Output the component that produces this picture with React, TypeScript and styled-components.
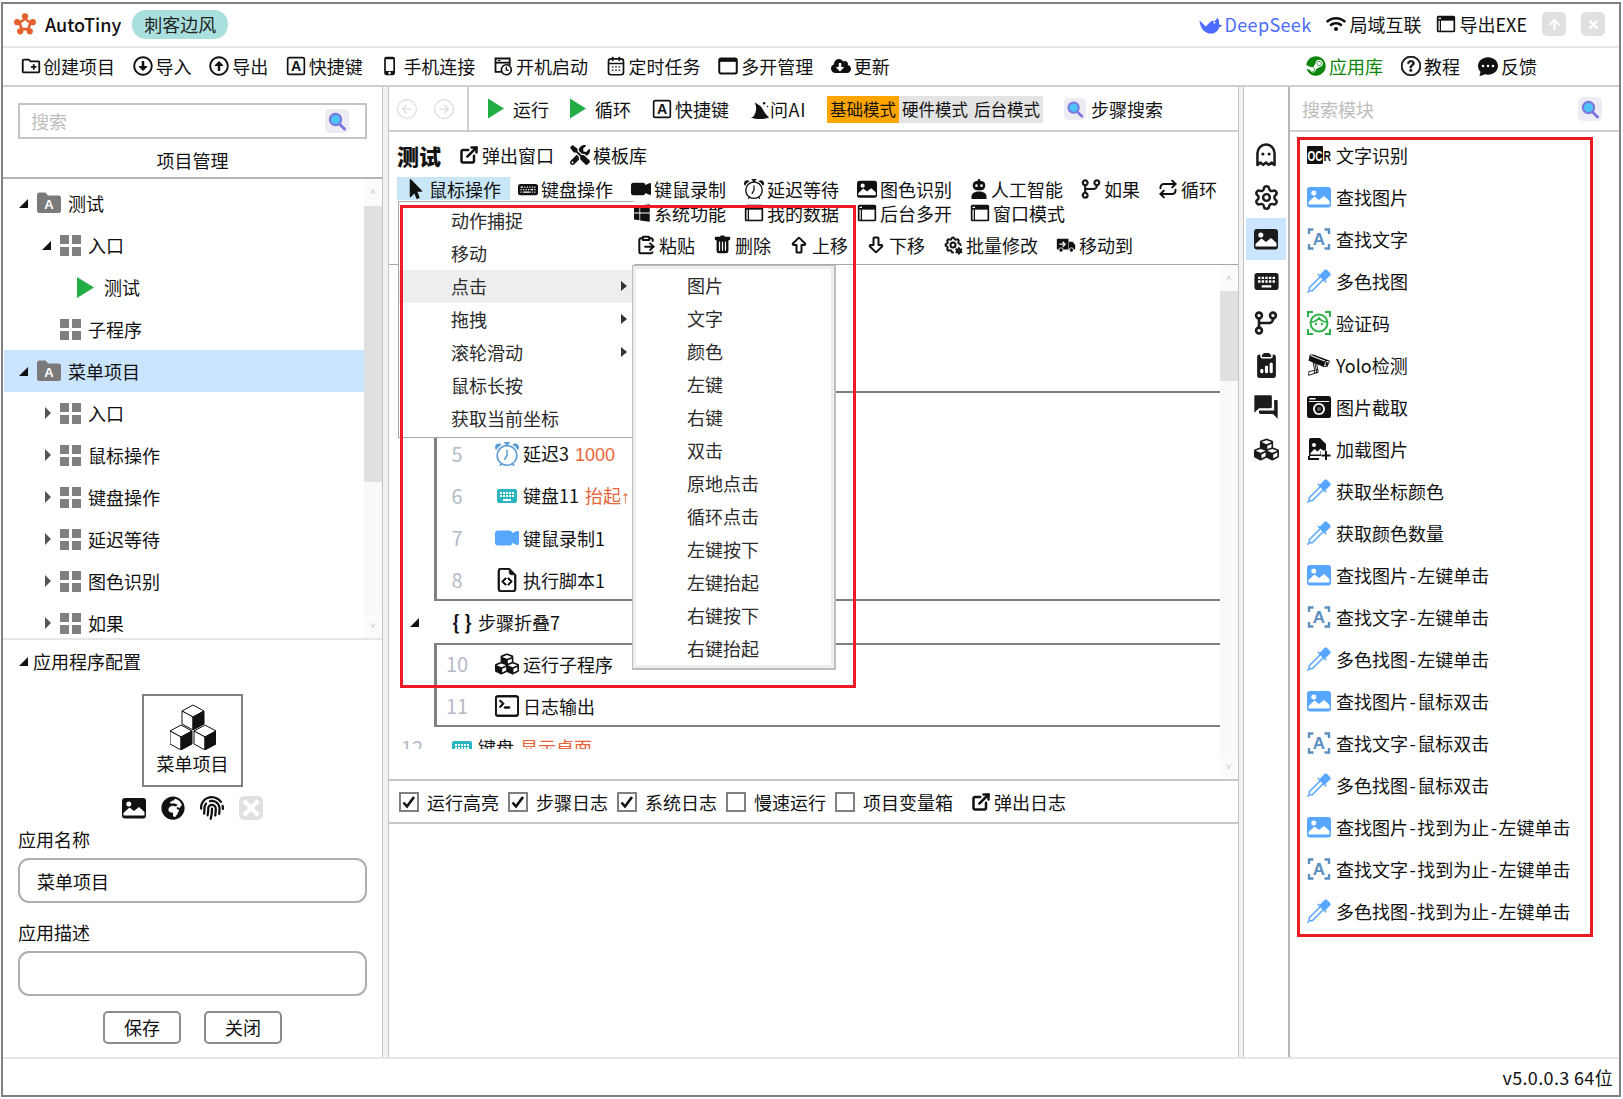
import React from 'react';
import styled, { createGlobalStyle } from 'styled-components';
import { Settings, ClipboardPaste, Repeat } from 'lucide-react';
import {
  FaSteam, FaWifi, FaCloudDownloadAlt, FaMousePointer, FaTools, FaWindows, FaCubes,
  FaFingerprint, FaGlobeAfrica, FaTimes, FaArrowUp, FaRegArrowAltCircleDown, FaRegArrowAltCircleUp,
} from 'react-icons/fa';
import {
  BsKeyboardFill, BsCameraVideoFill, BsAlarm, BsTrashFill, BsEyedropper, BsClipboard2DataFill,
  BsFileEarmarkCode, BsTerminal, BsQuestionCircle, BsChatDotsFill, BsArrowLeftCircle, BsArrowRightCircle,
} from 'react-icons/bs';
import { MdOutlineCreateNewFolder, MdOutlinePhoneIphone, MdKeyboard, MdForum } from 'react-icons/md';
import { TbArrowBigUp, TbArrowBigDown, TbSettingsCog } from 'react-icons/tb';
import { GiCctvCamera } from 'react-icons/gi';
import { FiExternalLink } from 'react-icons/fi';

const GlobalStyle = createGlobalStyle`
  html, body { margin: 0; padding: 0; background: #fff; }
  * { box-sizing: border-box; }
  body {
    font-family: "Noto Sans CJK SC", "Noto Sans", sans-serif;
    font-size: 18px;
    color: #111;
    overflow: hidden;
  }
`;

/* ---------- drawn icons ---------- */

const Logo = () => (
  <svg viewBox="0 0 24 24" width="22" height="22">
    <g fill="#e5602d">
      <circle cx="12" cy="3.600" r="3.400" />
      <circle cx="20.500" cy="10" r="3.400" />
      <circle cx="17.200" cy="20" r="3.400" />
      <circle cx="6.800" cy="20" r="3.400" />
      <circle cx="3.500" cy="10" r="3.400" />
    </g>
    <path d="M12 4.500l7.500 5.500-2.800 9H7.300l-2.800-9z" fill="#e5602d" />
    <path d="M12 8l4.200 3.100-1.600 5H9.400l-1.600-5z" fill="#fff" />
  </svg>
);

const Whale = () => (
  <svg viewBox="0 0 24 20">
    <path
      fill="#4d6bfe"
      d="M.5 5.500c.5 7.500 5 14 12 14 4.500 0 7.500-3 8.500-7 1 .5 2.500-.5 3-2-1 .2-2.200 0-3-.8.500-2.500-.300-5-1.800-6.700l-2.700 3.500c-1.500-.6-3.200-.4-4.500.6L7 12 .5 5.500z"
    />
    <circle cx="16" cy="8" r="1.100" fill="#fff" />
  </svg>
);

const Finder = () => (
  <svg viewBox="0 0 24 24">
    <rect width="24" height="24" rx="5" fill="#ececf2" />
    <path d="M14.500 15l5 5" stroke="#7b78e0" strokeWidth="3" strokeLinecap="round" />
    <circle cx="10.500" cy="10.500" r="5.600" fill="#4fc3f7" stroke="#7b78e0" strokeWidth="2.200" />
  </svg>
);

const ImageIcon = ({ color = '#111' }: { color?: string }) => (
  <svg viewBox="0 0 24 24">
    <rect y="2" width="24" height="20.500" rx="3" fill={color} />
    <circle cx="6.800" cy="8" r="2.500" fill="#fff" />
    <path d="M1.500 19.500v-2.500l6-5.500 4.500 3.500 5-4 5.500 5v3.500z" fill="#fff" />
  </svg>
);

const WindowIcon = () => (
  <svg viewBox="0 0 24 24">
    <rect x="1" y="2" width="22" height="20" rx="2" fill="#111" />
    <rect x="6" y="8" width="15" height="12" fill="#fff" />
    <rect x="3" y="8" width="1.500" height="12" fill="#fff" />
    <rect x="3" y="4.500" width="3" height="1.500" fill="#fff" />
  </svg>
);

const PlainWindow = () => (
  <svg viewBox="0 0 24 24">
    <rect x="1.500" y="3" width="21" height="18" rx="2" fill="none" stroke="#111" strokeWidth="2.400" />
    <rect x="1.500" y="3" width="21" height="4" fill="#111" />
  </svg>
);

const BootIcon = () => (
  <svg viewBox="0 0 24 24">
    <path d="M10 19H3V3h17v8" fill="none" stroke="#111" strokeWidth="2.200" />
    <path d="M3 8h17" stroke="#111" strokeWidth="2.200" />
    <path d="M6 5.500h3" stroke="#111" strokeWidth="1.400" />
    <circle cx="16" cy="16.500" r="6" fill="#fff" stroke="#111" strokeWidth="2" />
    <path d="M16 13v4h3" fill="none" stroke="#111" strokeWidth="1.600" />
  </svg>
);

const CalendarIcon = () => (
  <svg viewBox="0 0 24 24">
    <rect x="3" y="3.500" width="18" height="19" rx="3" fill="none" stroke="#111" strokeWidth="2" />
    <path d="M3 9h18M8 1v5M16 1v5" stroke="#111" strokeWidth="2" />
    <path d="M7 13h2M11 13h2M15 13h2M7 17h2M11 17h2M15 17h2" stroke="#111" strokeWidth="1.600" />
  </svg>
);

const HotkeyIcon = () => (
  <svg viewBox="0 0 24 24">
    <rect x="2" y="2" width="20" height="20" rx="2" fill="none" stroke="#111" strokeWidth="2" />
    <text x="12" y="18" fontSize="17" fontWeight="700" fill="#111" textAnchor="middle" fontFamily="Liberation Sans, sans-serif">A</text>
  </svg>
);

const HatIcon = () => (
  <svg viewBox="0 0 24 24">
    <path d="M1 22c3 0 5-3 6-8 .7-3 .5-6-1.500-10l6.500 4c3.500 2.500 5 10 11 14-3 2-7 2-11 2s-8 0-11-2z" fill="#111" />
    <circle cx="17" cy="5" r="1.500" fill="#111" />
    <circle cx="21" cy="9" r="1" fill="#111" />
  </svg>
);

const BranchIcon = () => (
  <svg viewBox="0 0 24 24">
    <g fill="none" stroke="#1b1b1b" strokeWidth="2.600">
      <circle cx="5" cy="4.500" r="2.900" />
      <circle cx="5" cy="19.500" r="2.900" />
      <circle cx="19" cy="4.500" r="2.900" />
      <path d="M5 7.500v9M19 7.500v.5a4 4 0 01-4 4H5" />
    </g>
  </svg>
);

const TruckIcon = () => (
  <svg viewBox="0 0 24 24">
    <path d="M1 5.500a1 1 0 011-1h13v13H2a1 1 0 01-1-1z" fill="#111" />
    <path d="M15.500 8H20l3 4v5.500h-7.500z" fill="#111" />
    <circle cx="6" cy="18" r="2.600" fill="#111" stroke="#fff" strokeWidth="1" />
    <circle cx="18.500" cy="18" r="2.600" fill="#111" stroke="#fff" strokeWidth="1" />
    <path d="M4 11h6M8 8l3 3-3 3" fill="none" stroke="#fff" strokeWidth="1.600" />
  </svg>
);

const GhostIcon = () => (
  <svg viewBox="2.500 .5 19 23">
    <path
      d="M12 2a8.200 8.200 0 00-8.200 8.200v11.300l2.800-2.300 2.700 2.300L12 19.200l2.700 2.300 2.700-2.300 2.800 2.300V10.200A8.200 8.200 0 0012 2z"
      fill="none"
      stroke="#1b1b1b"
      strokeWidth="2.400"
      strokeLinejoin="round"
    />
    <circle cx="9" cy="11" r="1.500" fill="#1b1b1b" />
    <circle cx="15" cy="11" r="1.500" fill="#1b1b1b" />
  </svg>
);

const GridIcon = () => (
  <svg viewBox="0 0 21 21">
    <g fill="#808080">
      <rect width="9" height="9" />
      <rect x="12" width="9" height="9" />
      <rect y="12" width="9" height="9" />
      <rect x="12" y="12" width="9" height="9" />
    </g>
  </svg>
);

const PlayIcon = () => (
  <svg viewBox="0 0 17 21">
    <path d="M0 0l17 10.500L0 21z" fill="#22ac44" />
  </svg>
);

const FolderA = () => (
  <svg viewBox="0 0 24 24">
    <path d="M0 4a2.500 2.500 0 012.500-2.500h6L11 4.500h10.500A2.500 2.500 0 0124 7v12.500a2.500 2.500 0 01-2.500 2.500h-19A2.500 2.500 0 010 19.500z" fill="#7a7a7a" />
    <text x="12" y="18" fontSize="13" fontWeight="700" fill="#fff" textAnchor="middle" fontFamily="Liberation Sans, sans-serif">A</text>
  </svg>
);

const OcrIcon = () => (
  <svg viewBox="0 0 24 24">
    <rect y="3" width="16" height="18" rx="1" fill="#111" />
    <text x="0.500" y="18" fontSize="15" fontWeight="700" fill="#fff" fontFamily="Liberation Sans, sans-serif" textLength="15" lengthAdjust="spacingAndGlyphs">OC</text>
    <text x="16.500" y="18" fontSize="15" fontWeight="700" fill="#111" fontFamily="Liberation Sans, sans-serif" textLength="7.500" lengthAdjust="spacingAndGlyphs">R</text>
  </svg>
);

const TextFind = () => (
  <svg viewBox="0 0 24 24">
    <path d="M2 7V2.500h4.500M17.500 2.500H22V7M22 17v4.500h-4.500M6.500 21.500H2V17" fill="none" stroke="#5b8fbf" strokeWidth="2.400" />
    <text x="12" y="18" fontSize="17" fontWeight="700" fill="#5b8fbf" textAnchor="middle" fontFamily="Liberation Sans, sans-serif">A</text>
  </svg>
);

const Captcha = () => (
  <svg viewBox="0 0 24 24">
    <path d="M1 6V1h5M18 1h5v5M23 18v5h-5M6 23H1v-5" fill="none" stroke="#2fb24c" strokeWidth="2" />
    <circle cx="12" cy="12" r="8.500" fill="none" stroke="#2fb24c" strokeWidth="2" />
    <path d="M4 11c3 0 6-1.500 8-4 2 2.500 5 4 8 4" fill="none" stroke="#2fb24c" strokeWidth="2" />
    <circle cx="9" cy="13" r="1.200" fill="#2fb24c" />
    <circle cx="15" cy="13" r="1.200" fill="#2fb24c" />
  </svg>
);

const ShotIcon = () => (
  <svg viewBox="0 0 24 24">
    <rect y="1" width="24" height="22" rx="2.500" fill="#111" />
    <path d="M2 6.500h20" stroke="#fff" strokeWidth="1" />
    <rect x="2.500" y="3" width="6" height="1.500" fill="#fff" />
    <circle cx="12" cy="14" r="6" fill="#fff" />
    <circle cx="12" cy="14" r="4.200" fill="#111" />
    <circle cx="12" cy="14" r="2" fill="#666" />
  </svg>
);

const LoadImage = () => (
  <svg viewBox="0 0 24 24">
    <path d="M2 3a2 2 0 012-2h9l6 6v6.500h-5V19H2z" fill="#111" />
    <circle cx="7" cy="8" r="2" fill="#fff" />
    <path d="M3.500 16l4-4 3 2.500 3-3 3 2.500h-3v3.500H3.500z" fill="#fff" />
    <path d="M19 14v9M14.500 18.500h9" stroke="#111" strokeWidth="2" />
    <path d="M2 19v3h10" fill="none" stroke="#111" strokeWidth="2" />
  </svg>
);

const BotIcon = () => (
  <svg viewBox="0 0 20 24">
    <circle cx="10" cy="1.500" r="1.500" fill="#111" />
    <rect x="2.500" y="2.500" width="15" height="11" rx="5" fill="#111" />
    <circle cx="7" cy="8" r="1.600" fill="#fff" />
    <circle cx="13" cy="8" r="1.600" fill="#fff" />
    <path d="M1 24v-3c0-4 4-6 9-6s9 2 9 6v3z" fill="#111" />
  </svg>
);

const Cubes = () => (
  <svg viewBox="0 0 46 46" width="46" height="46">
    {[[23, 0], [11, 20], [35, 20]].map(([x, y]) => (
      <g key={`${x}-${y}`} transform={`translate(${x - 12} ${y})`} stroke="#111" strokeWidth="1">
        <path d="M12 1l11 6-11 6L1 7z" fill="#fff" />
        <path d="M1 7l11 6v13L1 20z" fill="#fff" />
        <path d="M23 7l-11 6v13l11-6z" fill="#111" />
      </g>
    ))}
  </svg>
);

/* ---------- page frame ---------- */

const Page = styled.div`
  width: 1623px;
  height: 1099px;
  padding: 2px 0 0 1px;
`;

const Frame = styled.div`
  position: relative;
  width: 1620px;
  height: 1095px;
  border: 2px solid #808080;
  display: flex;
  flex-direction: column;
  background: #fff;
`;

const TitleBar = styled.header`
  height: 44px;
  flex: none;
  display: flex;
  align-items: center;
  padding: 0 14px 2px 11px;
  border-bottom: 2px solid #e6e6e6;
`;

const Brand = styled.span`
  margin-left: 9px;
  font-size: 18px;
  font-weight: 500;
  line-height: 24px;
`;

const Chip = styled.span`
  margin-left: 11px;
  width: 96px;
  height: 29px;
  border-radius: 14px;
  background: #a9e0de;
  color: #222;
  line-height: 29px;
  text-align: center;
`;

const TitleActions = styled.div`
  margin-left: auto;
  display: flex;
  align-items: center;
  gap: 15px;
`;

const Tool = styled.span<{ $gap?: number; $tint?: string; $icon?: number }>`
  display: inline-flex;
  align-items: center;
  gap: ${(p) => p.$gap ?? 3}px;
  flex: none;
  height: 24px;
  line-height: 24px;
  white-space: nowrap;
  color: ${(p) => p.$tint ?? '#111'};
  svg {
    width: ${(p) => p.$icon ?? 20}px;
    height: ${(p) => (p.$icon && p.$icon > 20 ? p.$icon : 20)}px;
    flex: none;
  }
`;

const DeepSeekLink = styled(Tool)`
  letter-spacing: 0.35px;
`;

const AskAi = styled(Tool)`
  letter-spacing: 0.6px;
`;

const SquareBtn = styled.span`
  width: 24px;
  height: 24px;
  border-radius: 5px;
  background: #e0e0e0;
  color: #fff;
  display: flex;
  align-items: center;
  justify-content: center;
  svg {
    width: 13px;
    height: 13px;
  }
`;

const MainBar = styled.nav`
  height: 39px;
  flex: none;
  display: flex;
  align-items: center;
  gap: 17.6px;
  padding: 0 82px 2px 17px;
  border-bottom: 2px solid #cfcfcf;
`;

const BarEnd = styled.div`
  margin-left: auto;
  display: flex;
  gap: 18px;
`;

const Body = styled.main`
  height: 970px;
  flex: none;
  display: flex;
`;

const Status = styled.footer`
  flex: 1;
  display: flex;
  align-items: center;
  justify-content: flex-end;
  padding-right: 6px;
  letter-spacing: 0.35px;
  border-top: 2px solid #e6e6e6;
`;

const Gutter = styled.div<{ $w: number }>`
  width: ${(p) => p.$w}px;
  flex: none;
  background: #f2f2f2;
  border-left: 1px solid #c4c4c4;
  border-right: 1px solid #c4c4c4;
`;

/* ---------- left panel ---------- */

const LeftPanel = styled.aside`
  width: 379px;
  flex: none;
  display: flex;
  flex-direction: column;
`;

const SearchBox = styled.div`
  margin: 16px 15px 0;
  width: 349px;
  height: 36px;
  flex: none;
  border: 2px solid #c4c4c4;
  display: flex;
  align-items: center;
  justify-content: space-between;
  padding: 0 16px 0 11px;
  color: #bdbdbd;
  svg {
    width: 24px;
    height: 24px;
  }
`;

const PanelTitle = styled.div`
  height: 40px;
  flex: none;
  line-height: 42px;
  text-align: center;
  border-bottom: 2px solid #b5b5b5;
`;

const TreeWrap = styled.div`
  height: 459px;
  flex: none;
  display: flex;
  overflow: hidden;
`;

const TreeList = styled.div`
  flex: 1;
  padding: 3px 0 0 1px;
  overflow: hidden;
`;

const TreeRow = styled.div<{ $indent: number; $selected?: boolean }>`
  height: 42px;
  display: flex;
  align-items: center;
  gap: 7px;
  padding-left: ${(p) => p.$indent}px;
  background: ${(p) => (p.$selected ? '#cce5ff' : 'transparent')};
  svg {
    flex: none;
    height: 21px;
    width: 21px;
  }
`;

const ArrowSlot = styled.span`
  width: 15px;
  flex: none;
  display: flex;
`;

const OpenArrow = styled.i`
  width: 0;
  height: 0;
  margin-left: 4px;
  border-style: solid;
  border-width: 0 0 9px 9px;
  border-color: transparent transparent #111 transparent;
`;

const ClosedArrow = styled.i`
  width: 0;
  height: 0;
  margin-left: 7px;
  border-style: solid;
  border-width: 6px 0 6px 6px;
  border-color: transparent transparent transparent #555;
`;

const FolderSlot = styled.span`
  display: flex;
  svg {
    width: 24px;
    height: 24px;
  }
`;

const PlaySlot = styled.span`
  width: 20px;
  display: flex;
  svg {
    width: 17px;
    height: 21px;
  }
`;

const Scrollbar = styled.div<{ $w: number }>`
  width: ${(p) => p.$w}px;
  flex: none;
  display: flex;
  flex-direction: column;
  background: #f9f9f9;
`;

const ScrollEnd = styled.div<{ $h: number }>`
  height: ${(p) => p.$h}px;
  flex: none;
  background: #fbfbfb;
  color: #c4c4c4;
  font-size: 9px;
  line-height: ${(p) => p.$h}px;
  text-align: center;
  font-family: "Liberation Sans", sans-serif;
`;

const ScrollThumb = styled.div<{ $h: number }>`
  height: ${(p) => p.$h}px;
  flex: none;
  background: #e0e0e0;
`;

const ScrollRest = styled.div`
  flex: 1;
`;

const ConfigPanel = styled.section`
  flex: 1;
  border-top: 2px solid #e6e6e6;
  padding: 0 15px;
  display: flex;
  flex-direction: column;
`;

const ConfigHead = styled.div`
  height: 42px;
  flex: none;
  margin-left: -3px;
  display: flex;
  align-items: center;
  gap: 5px;
`;

const AppCard = styled.div`
  width: 101px;
  height: 93px;
  flex: none;
  margin: 12px auto 0;
  padding-top: 8px;
  border: 2px solid #808080;
  display: flex;
  flex-direction: column;
  align-items: center;
  line-height: 24px;
  font-size: 18px;
  svg {
    margin-bottom: 1px;
  }
`;

const AppIcons = styled.div`
  height: 24px;
  flex: none;
  margin-top: 9px;
  display: flex;
  justify-content: center;
  gap: 15px;
  svg {
    width: 24px;
    height: 24px;
  }
`;

const FieldLabel = styled.div<{ $top: number }>`
  height: 24px;
  line-height: 24px;
  flex: none;
  margin-top: ${(p) => p.$top}px;
`;

const Field = styled.div`
  height: 45px;
  flex: none;
  margin-top: 7px;
  width: 349px;
  border: 2px solid #aeaeae;
  border-radius: 11px;
  padding-left: 17px;
  line-height: 42px;
`;

const FormActions = styled.div`
  margin-top: 15px;
  display: flex;
  justify-content: center;
  gap: 23px;
`;

const FormBtn = styled.div`
  width: 78px;
  height: 33px;
  border: 2px solid #8c8c8c;
  border-radius: 5px;
  text-align: center;
  line-height: 29px;
`;

/* ---------- centre ---------- */

const Center = styled.section`
  width: 849px;
  flex: none;
  display: flex;
  flex-direction: column;
`;

const CenterBar = styled.div`
  height: 45px;
  flex: none;
  display: flex;
  align-items: stretch;
  border-bottom: 2px solid #cfcfcf;
`;

const NavGroup = styled.div`
  width: 80px;
  flex: none;
  padding-left: 8px;
  display: flex;
  align-items: center;
  gap: 17px;
  border-right: 2px solid #cfcfcf;
  color: #dcdcdc;
  svg {
    width: 20px;
    height: 20px;
  }
`;

const RunGroup = styled.div`
  flex: 1;
  padding-left: 19px;
  display: flex;
  align-items: center;
  gap: 21px;
`;

const PlayGlyph = styled.span`
  display: flex;
  svg {
    width: 16px;
    height: 23px;
  }
`;

const ModeGroup = styled.div`
  display: flex;
  height: 27px;
  margin-top: 1px;
`;

const Mode = styled.span<{ $on?: boolean }>`
  width: 72px;
  text-align: center;
  font-size: 16.500px;
  line-height: 27px;
  white-space: nowrap;
  background: ${(p) => (p.$on ? '#ffa500' : '#e4e4e4')};
`;

const FinderGlyph = styled.span`
  display: flex;
  svg {
    width: 22px !important;
    height: 24px !important;
  }
`;

const TitleRow = styled.div`
  height: 45px;
  flex: none;
  padding: 0 0 0 8px;
  display: flex;
  align-items: center;
  gap: 16px;
`;

const StepName = styled.strong`
  font-size: 22px;
  font-weight: 900;
  line-height: 28px;
  margin-right: 2px;
`;

const ToolRow = styled.div<{ $top?: number; $left?: number }>`
  height: 23px;
  flex: none;
  margin-top: ${(p) => p.$top ?? 0}px;
  padding-left: ${(p) => p.$left ?? 8}px;
  display: flex;
  align-items: center;
  gap: 18px;
`;

const ActiveTab = styled(Tool)<{ $on?: boolean }>`
  height: 23px;
  width: 113px;
  margin-right: -10px;
  padding-left: 9px;
  background: ${(p) => (p.$on ? '#c9e6f7' : 'transparent')};
`;

const StepArea = styled.div`
  margin-top: 8px;
  height: 515px;
  flex: none;
  display: flex;
  border-top: 1px solid #a8a8a8;
`;

const StepView = styled.div`
  flex: 1;
  height: 484px;
  overflow: hidden;
`;

const Group = styled.div`
  margin-left: 45px;
  box-shadow: inset 3px 0 #808080, inset 0 2px #808080, inset 0 -2px #808080;
`;

const Step = styled.div`
  height: 42px;
  display: flex;
  align-items: center;
  line-height: 24px;
  white-space: nowrap;
  svg {
    width: 24px;
    height: 24px;
    flex: none;
  }
`;

const StepNum = styled.span`
  width: 46px;
  flex: none;
  margin-right: 15px;
  text-align: center;
  color: #b3bbc7;
  font-size: 20px;
  display: flex;
  justify-content: center;
`;

const StepText = styled.span`
  margin-left: 4px;
`;

const Accent = styled.span`
  margin-left: 6px;
  color: #e8643a;
  font-family: "Liberation Sans", "Noto Sans CJK SC", sans-serif;
`;

const Braces = styled.span`
  width: 24px;
  font-weight: 700;
  font-size: 20px;
  word-spacing: 0;
  text-align: center;
`;

const LogBar = styled.div`
  height: 45px;
  flex: none;
  display: flex;
  align-items: center;
  gap: 9px;
  padding-left: 10px;
  border-top: 2px solid #c8c8c8;
  border-bottom: 2px solid #c8c8c8;
`;

const CheckLabel = styled.label`
  display: inline-flex;
  align-items: center;
  gap: 8px;
  line-height: 24px;
`;

const CheckBox = styled.span`
  width: 20px;
  height: 20px;
  border: 2px solid #808080;
  display: flex;
  align-items: center;
  justify-content: center;
  svg {
    width: 16px;
    height: 16px;
  }
`;

const LogOutlet = styled(Tool)`
  margin-left: 9px;
`;

/* ---------- right side ---------- */

const Strip = styled.div`
  width: 46px;
  flex: none;
  padding: 47px 2px 0;
  border-right: 2px solid #b5b5b5;
`;

const StripBtn = styled.div<{ $on?: boolean; $size: number }>`
  height: 42px;
  display: flex;
  align-items: center;
  justify-content: center;
  background: ${(p) => (p.$on ? '#cce5ff' : 'transparent')};
  color: #1b1b1b;
  svg {
    width: ${(p) => p.$size}px;
    height: ${(p) => p.$size}px;
    flex: none;
  }
`;

const RightPanel = styled.aside`
  flex: 1;
  display: flex;
  flex-direction: column;
`;

const ModuleSearch = styled.div`
  height: 45px;
  flex: none;
  display: flex;
  align-items: center;
  justify-content: space-between;
  padding: 0 17px 0 12px;
  color: #bdbdbd;
  border-bottom: 2px solid #cfcfcf;
  svg {
    width: 24px;
    height: 24px;
  }
`;

const ModuleList = styled.div`
  padding: 2px 0 0 17px;
`;

const Module = styled.div`
  height: 42px;
  display: flex;
  align-items: center;
  gap: 5px;
  padding-bottom: 1px;
  white-space: nowrap;
  line-height: 24px;
  svg {
    width: 24px;
    height: 24px;
    flex: none;
  }
`;

const Dash = styled.span`
  margin: 0 1.5px;
`;

const Dropper = styled(BsEyedropper)`
  color: #57a6ff;
`;

/* ---------- overlays ---------- */

const Menu = styled.div`
  position: absolute;
  left: 395px;
  top: 197px;
  width: 236px;
  padding: 2px 1px 2px 0;
  background: #fff;
  border: 1px solid #a9a9a9;
  border-right: none;
  z-index: 3;
`;

const SubMenu = styled.div`
  position: absolute;
  left: 629px;
  top: 261px;
  width: 204px;
  padding: 3px;
  background: #fff;
  border: 1px solid #bdbdbd;
  border-width: 1px 2px 2px 1px;
  box-shadow: inset 0 0 0 3px #eeeeee;
  z-index: 4;
`;

const MenuItem = styled.div<{ $on?: boolean; $pad: number }>`
  height: 33px;
  display: flex;
  align-items: center;
  justify-content: space-between;
  padding: 0 6px 2px ${(p) => p.$pad}px;
  line-height: 24px;
  color: #2b2b2b;
  background: ${(p) => (p.$on ? '#eeeeee' : 'transparent')};
`;

const MenuCaret = styled.i`
  width: 0;
  height: 0;
  border-style: solid;
  border-width: 5.500px 0 5.500px 6px;
  border-color: transparent transparent transparent #333;
`;

const Callout = styled.div<{ $x: number; $y: number; $w: number; $h: number }>`
  position: absolute;
  left: ${(p) => p.$x}px;
  top: ${(p) => p.$y}px;
  width: ${(p) => p.$w}px;
  height: ${(p) => p.$h}px;
  border: 3px solid #ed1c24;
  pointer-events: none;
  z-index: 5;
`;

/* ---------- data ---------- */

type ToolItem = { label: string; icon: React.ReactNode; size?: number };

const tabs: ToolItem[] = [
  { label: '键盘操作', icon: <BsKeyboardFill /> },
  { label: '键鼠录制', icon: <BsCameraVideoFill /> },
  { label: '延迟等待', icon: <BsAlarm /> },
  { label: '图色识别', icon: <ImageIcon /> },
  { label: '人工智能', icon: <BotIcon />, size: 18 },
  { label: '如果', icon: <BranchIcon /> },
  { label: '循环', icon: <Repeat strokeWidth={2.4} /> },
];

const tabsSecond: ToolItem[] = [
  { label: '系统功能', icon: <FaWindows /> },
  { label: '我的数据', icon: <WindowIcon /> },
  { label: '后台多开', icon: <WindowIcon /> },
  { label: '窗口模式', icon: <WindowIcon /> },
];

const edits: ToolItem[] = [
  { label: '全选', icon: <WindowIcon /> },
  { label: '复制', icon: <ClipboardPaste /> },
  { label: '剪切', icon: <FaTools /> },
  { label: '粘贴', icon: <ClipboardPaste strokeWidth={2.4} /> },
  { label: '删除', icon: <BsTrashFill />, size: 19 },
  { label: '上移', icon: <TbArrowBigUp strokeWidth={2.4} /> },
  { label: '下移', icon: <TbArrowBigDown strokeWidth={2.4} /> },
  { label: '批量修改', icon: <TbSettingsCog strokeWidth={2.4} /> },
  { label: '移动到', icon: <TruckIcon /> },
];

const mainMenu = [
  { label: '动作捕捉' },
  { label: '移动' },
  { label: '点击', sub: true, on: true },
  { label: '拖拽', sub: true },
  { label: '滚轮滑动', sub: true },
  { label: '鼠标长按' },
  { label: '获取当前坐标' },
];

const clickMenu = ['图片', '文字', '颜色', '左键', '右键', '双击', '原地点击', '循环点击', '左键按下', '左键抬起', '右键按下', '右键抬起'];

const blueImage = <ImageIcon color="#57a6ff" />;

const modules = [
  { label: '文字识别', icon: <OcrIcon /> },
  { label: '查找图片', icon: blueImage },
  { label: '查找文字', icon: <TextFind /> },
  { label: '多色找图', icon: <Dropper /> },
  { label: '验证码', icon: <Captcha /> },
  { label: 'Yolo检测', icon: <GiCctvCamera /> },
  { label: '图片截取', icon: <ShotIcon /> },
  { label: '加载图片', icon: <LoadImage /> },
  { label: '获取坐标颜色', icon: <Dropper /> },
  { label: '获取颜色数量', icon: <Dropper /> },
  { label: '查找图片-左键单击', icon: blueImage },
  { label: '查找文字-左键单击', icon: <TextFind /> },
  { label: '多色找图-左键单击', icon: <Dropper /> },
  { label: '查找图片-鼠标双击', icon: blueImage },
  { label: '查找文字-鼠标双击', icon: <TextFind /> },
  { label: '多色找图-鼠标双击', icon: <Dropper /> },
  { label: '查找图片-找到为止-左键单击', icon: blueImage },
  { label: '查找文字-找到为止-左键单击', icon: <TextFind /> },
  { label: '多色找图-找到为止-左键单击', icon: <Dropper /> },
];

const strip = [
  { id: 'ghost', size: 24, icon: <GhostIcon /> },
  { id: 'settings', size: 27, icon: <Settings strokeWidth={2.2} /> },
  { id: 'image', size: 24, icon: <ImageIcon color="#1b1b1b" /> },
  { id: 'keys', size: 29, icon: <MdKeyboard /> },
  { id: 'branch', size: 24, icon: <BranchIcon /> },
  { id: 'report', size: 25, icon: <BsClipboard2DataFill /> },
  { id: 'forum', size: 28, icon: <MdForum /> },
  { id: 'cubes', size: 25, icon: <FaCubes /> },
];

const subFolders = ['入口', '鼠标操作', '键盘操作', '延迟等待', '图色识别', '如果'];

const Tick = () => (
  <svg viewBox="0 0 16 16">
    <path d="M2.500 8.500l3.500 4 7-9.500" fill="none" stroke="#111" strokeWidth="2.600" />
  </svg>
);

const logChecks = [
  { label: '运行高亮', on: true },
  { label: '步骤日志', on: true },
  { label: '系统日志', on: true },
  { label: '慢速运行' },
  { label: '项目变量箱' },
];

const ModuleLabel = ({ text }: { text: string }) => (
  <span>
    {text.split('-').map((part, i) => (
      <React.Fragment key={part}>
        {i > 0 && <Dash>-</Dash>}
        {part}
      </React.Fragment>
    ))}
  </span>
);

const App = () => (
  <>
    <GlobalStyle />
    <Page>
      <Frame>
        <TitleBar>
          <Logo />
          <Brand>AutoTiny</Brand>
          <Chip>刺客边风</Chip>
          <TitleActions>
            <DeepSeekLink $tint="#4d6bfe" $gap={3} $icon={23}>
              <Whale />
              DeepSeek
            </DeepSeekLink>
            <Tool>
              <FaWifi />
              局域互联
            </Tool>
            <Tool>
              <WindowIcon />
              导出EXE
            </Tool>
            <SquareBtn>
              <FaArrowUp />
            </SquareBtn>
            <SquareBtn>
              <FaTimes />
            </SquareBtn>
          </TitleActions>
        </TitleBar>

        <MainBar>
          <Tool $icon={22} $gap={1}><MdOutlineCreateNewFolder />创建项目</Tool>
          <Tool><FaRegArrowAltCircleDown />导入</Tool>
          <Tool><FaRegArrowAltCircleUp />导出</Tool>
          <Tool><HotkeyIcon />快捷键</Tool>
          <Tool><MdOutlinePhoneIphone />手机连接</Tool>
          <Tool><BootIcon />开机启动</Tool>
          <Tool><CalendarIcon />定时任务</Tool>
          <Tool><PlainWindow />多开管理</Tool>
          <Tool><FaCloudDownloadAlt />更新</Tool>
          <BarEnd>
            <Tool $tint="#0a860a"><FaSteam />应用库</Tool>
            <Tool><BsQuestionCircle strokeWidth={0.6} />教程</Tool>
            <Tool><BsChatDotsFill />反馈</Tool>
          </BarEnd>
        </MainBar>

        <Body>
          <LeftPanel>
            <SearchBox>
              搜索
              <Finder />
            </SearchBox>
            <PanelTitle>项目管理</PanelTitle>
            <TreeWrap>
              <TreeList>
                <TreeRow $indent={11}>
                  <ArrowSlot><OpenArrow /></ArrowSlot>
                  <FolderSlot><FolderA /></FolderSlot>
                  测试
                </TreeRow>
                <TreeRow $indent={34}>
                  <ArrowSlot><OpenArrow /></ArrowSlot>
                  <GridIcon />
                  入口
                </TreeRow>
                <TreeRow $indent={73}>
                  <PlaySlot><PlayIcon /></PlaySlot>
                  测试
                </TreeRow>
                <TreeRow $indent={34}>
                  <ArrowSlot />
                  <GridIcon />
                  子程序
                </TreeRow>
                <TreeRow $indent={11} $selected>
                  <ArrowSlot><OpenArrow /></ArrowSlot>
                  <FolderSlot><FolderA /></FolderSlot>
                  菜单项目
                </TreeRow>
                {subFolders.map((name) => (
                  <TreeRow key={name} $indent={34}>
                    <ArrowSlot><ClosedArrow /></ArrowSlot>
                    <GridIcon />
                    {name}
                  </TreeRow>
                ))}
              </TreeList>
              <Scrollbar $w={18}>
                <ScrollEnd $h={27}>˄</ScrollEnd>
                <ScrollThumb $h={276} />
                <ScrollRest />
                <ScrollEnd $h={24}>˅</ScrollEnd>
              </Scrollbar>
            </TreeWrap>
            <ConfigPanel>
              <ConfigHead>
                <OpenArrow />
                应用程序配置
              </ConfigHead>
              <AppCard>
                <Cubes />
                菜单项目
              </AppCard>
              <AppIcons>
                <ImageIcon />
                <FaGlobeAfrica />
                <FaFingerprint />
                <SquareBtn><FaTimes /></SquareBtn>
              </AppIcons>
              <FieldLabel $top={7}>应用名称</FieldLabel>
              <Field>菜单项目</Field>
              <FieldLabel $top={17}>应用描述</FieldLabel>
              <Field />
              <FormActions>
                <FormBtn>保存</FormBtn>
                <FormBtn>关闭</FormBtn>
              </FormActions>
            </ConfigPanel>
          </LeftPanel>

          <Gutter $w={7} />

          <Center>
            <CenterBar>
              <NavGroup>
                <BsArrowLeftCircle />
                <BsArrowRightCircle />
              </NavGroup>
              <RunGroup>
                <Tool $gap={9}><PlayGlyph><PlayIcon /></PlayGlyph>运行</Tool>
                <Tool $gap={9}><PlayGlyph><PlayIcon /></PlayGlyph>循环</Tool>
                <Tool><HotkeyIcon />快捷键</Tool>
                <AskAi $gap={0}><HatIcon />问AI</AskAi>
                <ModeGroup>
                  <Mode $on>基础模式</Mode>
                  <Mode>硬件模式</Mode>
                  <Mode>后台模式</Mode>
                </ModeGroup>
                <Tool $gap={5}><FinderGlyph><Finder /></FinderGlyph>步骤搜索</Tool>
              </RunGroup>
            </CenterBar>

            <TitleRow>
              <StepName>测试</StepName>
              <Tool><FiExternalLink strokeWidth={3} />弹出窗口</Tool>
              <Tool><FaTools />模板库</Tool>
            </TitleRow>

            <ToolRow>
              <ActiveTab $on $gap={3}><FaMousePointer />鼠标操作</ActiveTab>
              {tabs.map((t) => (
                <Tool key={t.label} $icon={t.size}>{t.icon}{t.label}</Tool>
              ))}
            </ToolRow>
            <ToolRow $top={1}>
              <ActiveTab $gap={3}><FaMousePointer />文件操作</ActiveTab>
              <Tool><FaWindows />网络请求</Tool>
              {tabsSecond.map((t) => (
                <Tool key={t.label}>{t.icon}{t.label}</Tool>
              ))}
            </ToolRow>
            <ToolRow $top={9} $left={16}>
              {edits.map((t) => (
                <Tool key={t.label} $icon={t.size}>{t.icon}{t.label}</Tool>
              ))}
            </ToolRow>

            <StepArea>
              <StepView>
                <Step><StepNum>1</StepNum><BsAlarm color="#5b9bd5" /><StepText>延迟1</StepText></Step>
                <Step><StepNum>2</StepNum><BsAlarm color="#5b9bd5" /><StepText>延迟2</StepText></Step>
                <Step><StepNum><OpenArrow /></StepNum><Braces>{'{ }'}</Braces><StepText>步骤折叠3</StepText></Step>
                <Group>
                  <Step><StepNum>4</StepNum><BsAlarm color="#5b9bd5" /><StepText>延迟2</StepText></Step>
                  <Step><StepNum>5</StepNum><BsAlarm color="#5b9bd5" /><StepText>延迟3<Accent>1000</Accent></StepText></Step>
                  <Step><StepNum>6</StepNum><MdKeyboard color="#2bb5c0" /><StepText>键盘11<Accent>抬起↑</Accent></StepText></Step>
                  <Step><StepNum>7</StepNum><BsCameraVideoFill color="#57a6ff" /><StepText>键鼠录制1</StepText></Step>
                  <Step><StepNum>8</StepNum><BsFileEarmarkCode strokeWidth={0.5} /><StepText>执行脚本1</StepText></Step>
                </Group>
                <Step><StepNum><OpenArrow /></StepNum><Braces>{'{ }'}</Braces><StepText>步骤折叠7</StepText></Step>
                <Group>
                  <Step><StepNum>10</StepNum><FaCubes /><StepText>运行子程序</StepText></Step>
                  <Step><StepNum>11</StepNum><BsTerminal strokeWidth={0.6} /><StepText>日志输出</StepText></Step>
                </Group>
                <Step><StepNum>12</StepNum><MdKeyboard color="#2bb5c0" /><StepText>键盘<Accent>显示桌面</Accent></StepText></Step>
              </StepView>
              <Scrollbar $w={18}>
                <ScrollEnd $h={26}>˄</ScrollEnd>
                <ScrollThumb $h={90} />
                <ScrollRest />
                <ScrollEnd $h={24}>˅</ScrollEnd>
              </Scrollbar>
            </StepArea>

            <LogBar>
              {logChecks.map((c) => (
                <CheckLabel key={c.label}>
                  <CheckBox>{c.on && <Tick />}</CheckBox>
                  {c.label}
                </CheckLabel>
              ))}
              <LogOutlet><FiExternalLink strokeWidth={3} />弹出日志</LogOutlet>
            </LogBar>
          </Center>

          <Gutter $w={6} />

          <Strip>
            {strip.map((s, i) => (
              <StripBtn key={s.id} $on={i === 2} $size={s.size}>{s.icon}</StripBtn>
            ))}
          </Strip>

          <RightPanel>
            <ModuleSearch>
              搜索模块
              <Finder />
            </ModuleSearch>
            <ModuleList>
              {modules.map((m) => (
                <Module key={m.label}>{m.icon}<ModuleLabel text={m.label} /></Module>
              ))}
            </ModuleList>
          </RightPanel>
        </Body>

        <Status>v5.0.0.3 64位</Status>

        <Menu>
          {mainMenu.map((m) => (
            <MenuItem key={m.label} $on={m.on} $pad={52}>
              {m.label}
              {m.sub && <MenuCaret />}
            </MenuItem>
          ))}
        </Menu>
        <SubMenu>
          {clickMenu.map((m) => (
            <MenuItem key={m} $pad={51}>{m}</MenuItem>
          ))}
        </SubMenu>
        <Callout $x={397} $y={201} $w={456} $h={483} />
        <Callout $x={1294} $y={133} $w={296} $h={800} />
      </Frame>
    </Page>
  </>
);

export default App;
